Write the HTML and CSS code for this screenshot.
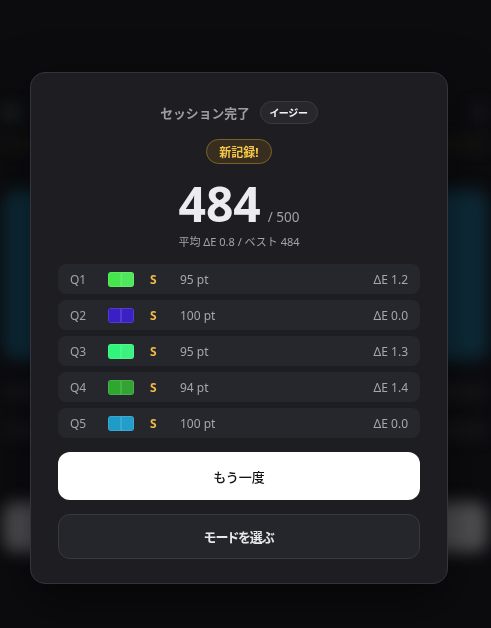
FILE: index.html
```html
<!DOCTYPE html>
<html lang="ja">
<head>
<meta charset="utf-8">
<title>セッション完了</title>
<link rel="stylesheet" href="styles.css">
</head>
<body>
<div class="backdrop" aria-hidden="true">
  <div class="bg-head"><span class="bg-dot"></span><span class="bg-dot right"></span></div>
  <div class="bg-strip"></div>
  <div class="bg-panel"></div>
  <div class="bg-row"></div>
  <div class="bg-row"></div>
  <div class="bg-btn"></div>
</div>

<div class="modal">
  <div class="title-row">
    <h1 class="title">セッション完了</h1>
    <span class="mode-badge">イージー</span>
  </div>
  <div class="record-wrap"><span class="record-badge">新記録!</span></div>
  <div class="score-line">
    <span class="score">484</span>
    <span class="score-max">/ 500</span>
  </div>
  <p class="summary">平均 ΔE 0.8 / ベスト 484</p>

  <ul class="results">
    <li class="result">
      <span class="q">Q1</span>
      <span class="swatch"><i style="background:#45e64b"></i><i style="background:#4fe85c"></i></span>
      <span class="grade">S</span>
      <span class="pts">95 pt</span>
      <span class="de">ΔE 1.2</span>
    </li>
    <li class="result">
      <span class="q">Q2</span>
      <span class="swatch"><i style="background:#3a1fc6"></i><i style="background:#3b21c4"></i></span>
      <span class="grade">S</span>
      <span class="pts">100 pt</span>
      <span class="de">ΔE 0.0</span>
    </li>
    <li class="result">
      <span class="q">Q3</span>
      <span class="swatch"><i style="background:#31f47a"></i><i style="background:#3cf17f"></i></span>
      <span class="grade">S</span>
      <span class="pts">95 pt</span>
      <span class="de">ΔE 1.3</span>
    </li>
    <li class="result">
      <span class="q">Q4</span>
      <span class="swatch"><i style="background:#2da72d"></i><i style="background:#33a433"></i></span>
      <span class="grade">S</span>
      <span class="pts">94 pt</span>
      <span class="de">ΔE 1.4</span>
    </li>
    <li class="result">
      <span class="q">Q5</span>
      <span class="swatch"><i style="background:#1f9bc8"></i><i style="background:#239dca"></i></span>
      <span class="grade">S</span>
      <span class="pts">100 pt</span>
      <span class="de">ΔE 0.0</span>
    </li>
  </ul>

  <div class="actions">
    <button class="btn btn-primary">もう一度</button>
    <button class="btn btn-secondary">モードを選ぶ</button>
  </div>
</div>
</body>
</html>
```

FILE: styles.css
```css
* { box-sizing: border-box; }

html, body {
  margin: 0;
  height: 100%;
}

body {
  background: #0c0c0f;
  font-family: "Noto Sans", "Noto Sans CJK JP", sans-serif;
  color: #e6e6ea;
  overflow: hidden;
}

/* blurred app behind the dialog */
.backdrop {
  position: fixed;
  inset: 0;
  padding: 106px 4px 0;
  filter: blur(8px);
}

.bg-head {
  display: flex;
  justify-content: space-between;
  height: 14px;
}

.bg-dot {
  width: 16px;
  height: 14px;
  border-radius: 50%;
  background: #232c29;
}

.bg-dot.right { background: #1a1c1f; }

.bg-strip {
  margin-top: 22px;
  height: 5px;
  background: #262014;
}

.bg-panel {
  margin-top: 43px;
  height: 170px;
  border-radius: 14px;
  background: #0e2c3a;
}

.bg-row {
  margin-top: 26px;
  height: 12px;
  border-radius: 6px;
  background: #19191c;
}

.bg-btn {
  margin-top: 66px;
  height: 50px;
  border-radius: 12px;
  background: #525255;
}

/* dialog */
.modal {
  position: absolute;
  top: 72px;
  left: 30px;
  width: 418px;
  padding: 28px 27px 24px;
  background: #1e1e22;
  border: 1px solid #34343a;
  border-radius: 15px;
  box-shadow: 0 16px 50px rgba(0, 0, 0, 0.55);
}

.title-row {
  display: flex;
  align-items: center;
  justify-content: center;
  gap: 10px;
  height: 23px;
}

.title {
  margin: 0;
  font-size: 12.8px;
  font-weight: 700;
  color: #9d9da3;
}

.mode-badge {
  display: inline-flex;
  align-items: center;
  height: 23px;
  padding: 0 9px;
  border: 1px solid #3a3a41;
  border-radius: 12px;
  background: #27272c;
  font-size: 10px;
  font-weight: 700;
  color: #f2f2f4;
  font-feature-settings: "palt";
}

.record-wrap {
  display: flex;
  justify-content: center;
  margin-top: 15px;
}

.record-badge {
  display: inline-flex;
  align-items: center;
  height: 25px;
  padding: 0 12px;
  border: 1px solid #7d6128;
  border-radius: 13px;
  background: #372e1f;
  font-size: 12px;
  font-weight: 700;
  color: #f6c649;
}

.score-line {
  display: flex;
  align-items: baseline;
  justify-content: center;
  gap: 7px;
  margin-top: 16px;
  height: 48px;
}

.score {
  font-size: 48px;
  line-height: 48px;
  font-weight: 700;
  color: #ececf0;
}

.score-max {
  font-size: 13.5px;
  line-height: 16px;
  color: #a0a0a6;
}

.summary {
  margin: 6px 0 0;
  text-align: center;
  font-size: 11px;
  line-height: 16px;
  color: #a3a3a9;
}

.results {
  list-style: none;
  margin: 14px 0 0;
  padding: 0;
  display: flex;
  flex-direction: column;
  gap: 6px;
}

.result {
  display: flex;
  align-items: center;
  height: 30px;
  padding: 0 12px;
  border-radius: 8px;
  background: #26272c;
  font-size: 12px;
  color: #a6a6ac;
}

.q {
  width: 38px;
  color: #a3a3a9;
}

.swatch {
  display: flex;
  width: 26px;
  height: 15px;
  margin-right: 16px;
  border-radius: 3px;
  overflow: hidden;
}

.swatch i {
  flex: 1;
  box-shadow: inset 0 0 0 1px rgba(255, 255, 255, 0.12);
}

.grade {
  width: 30px;
  font-weight: 700;
  color: #f2ba45;
}

.pts {
  flex: 1;
}

.de {
  color: #a6a6ac;
}

.actions {
  display: flex;
  flex-direction: column;
  gap: 14px;
  margin-top: 14px;
}

.btn {
  display: block;
  width: 100%;
  font-family: inherit;
  font-size: 13px;
  font-weight: 500;
  border-radius: 12px;
  cursor: pointer;
}

.btn-primary {
  height: 48px;
  border: none;
  background: #ffffff;
  color: #141416;
}

.btn-secondary {
  height: 45px;
  border: 1px solid #38383f;
  background: #25262b;
  color: #e8e8ec;
  font-weight: 700;
  font-feature-settings: "palt";
  letter-spacing: -0.8px;
}
```
